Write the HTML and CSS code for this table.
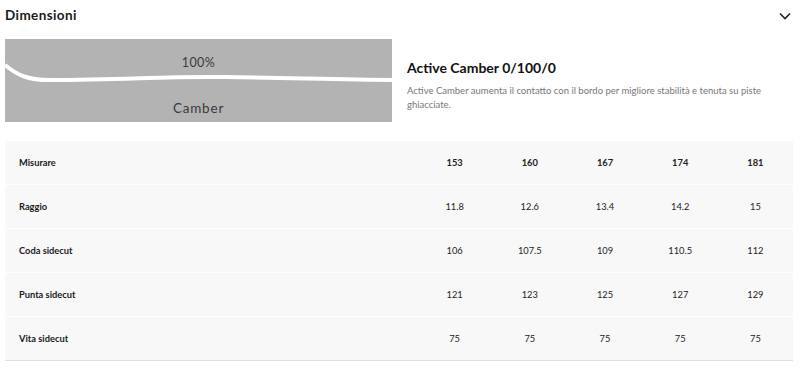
FILE: index.html
```html
<!DOCTYPE html>
<html lang="it">
<head>
<meta charset="utf-8">
<link rel="stylesheet" href="styles.css">
</head>
<body>
<section class="panel">
  <header class="panel-head">
    <h2 class="panel-title">Dimensioni</h2>
    <svg class="chevron" width="12" height="8" viewBox="0 0 12 8"><path d="M1 1.5 L6 6.5 L11 1.5" fill="none" stroke="#222" stroke-width="1.6"/></svg>
  </header>
  <div class="profile">
    <div class="profile-img">
      <svg class="wave" viewBox="0 0 387 83" preserveAspectRatio="none"><path d="M0,26 C12,36 22,41 45,41 C120,41 160,37 220,38 C290,39 340,41 387,41" fill="none" stroke="#fff" stroke-width="4"/></svg>
      <span class="pct">100%</span>
      <span class="ptype">Camber</span>
    </div>
    <div class="profile-text">
      <h3 class="profile-name">Active Camber 0/100/0</h3>
      <p class="profile-desc">Active Camber aumenta il contatto con il bordo per migliore stabilità e tenuta su piste ghiacciate.</p>
    </div>
  </div>
  <div class="table">
    <div class="row head"><div class="label">Misurare</div><div>153</div><div>160</div><div>167</div><div>174</div><div>181</div></div>
    <div class="row"><div class="label">Raggio</div><div>11.8</div><div>12.6</div><div>13.4</div><div>14.2</div><div>15</div></div>
    <div class="row"><div class="label">Coda sidecut</div><div>106</div><div>107.5</div><div>109</div><div>110.5</div><div>112</div></div>
    <div class="row"><div class="label">Punta sidecut</div><div>121</div><div>123</div><div>125</div><div>127</div><div>129</div></div>
    <div class="row"><div class="label">Vita sidecut</div><div>75</div><div>75</div><div>75</div><div>75</div><div>75</div></div>
  </div>
</section>
</body>
</html>
```
FILE: styles.css
```css
* { box-sizing: border-box; }
body { margin: 0; background: #fff; font-family: Lato, "Noto Sans", sans-serif; color: #1a1a1a; }
.panel { padding: 0 7px 0 5px; }
.panel-head { height: 30px; display: flex; align-items: center; justify-content: space-between; padding-right: 2px; }
.panel-title { margin: 0; font-size: 13.5px; font-weight: 700; color: #1a1a1a; letter-spacing: 0.4px; }
.chevron { display: block; margin-top: 1px; }
.profile { margin-top: 9px; display: flex; align-items: center; gap: 15px; }
.profile-img { position: relative; width: 387px; height: 83px; background: #b3b3b3; flex: none; }
.wave { position: absolute; left: 0; top: 0; width: 100%; height: 100%; }
.pct { position: absolute; left: 0; right: 0; top: 16px; text-align: center; font-size: 12.5px; color: #3a3a3a; letter-spacing: 0.4px; }
.ptype { position: absolute; left: 0; right: 0; top: 61px; text-align: center; font-size: 13.5px; color: #3a3a3a; letter-spacing: 0.8px; }
.profile-text { padding-top: 10px; }
.profile-name { margin: 0 0 8px; font-size: 14px; font-weight: 700; color: #111; }
.profile-desc { margin: 0; font-size: 9.5px; line-height: 14px; color: #777; max-width: 372px; }
.table { margin-top: 19px; border-bottom: 1px solid #e0e0e0; }
.row { display: grid; grid-template-columns: 412px repeat(5, 1fr); height: 43px; align-items: center; background: #f8f8f8; font-size: 9.3px; color: #222; text-align: center; }
.row + .row { border-top: 1px solid #fff; height: 44px; }
.row .label { text-align: left; padding-left: 14px; font-weight: 700; color: #1a1a1a; }
.row.head { font-weight: 700; }
```
